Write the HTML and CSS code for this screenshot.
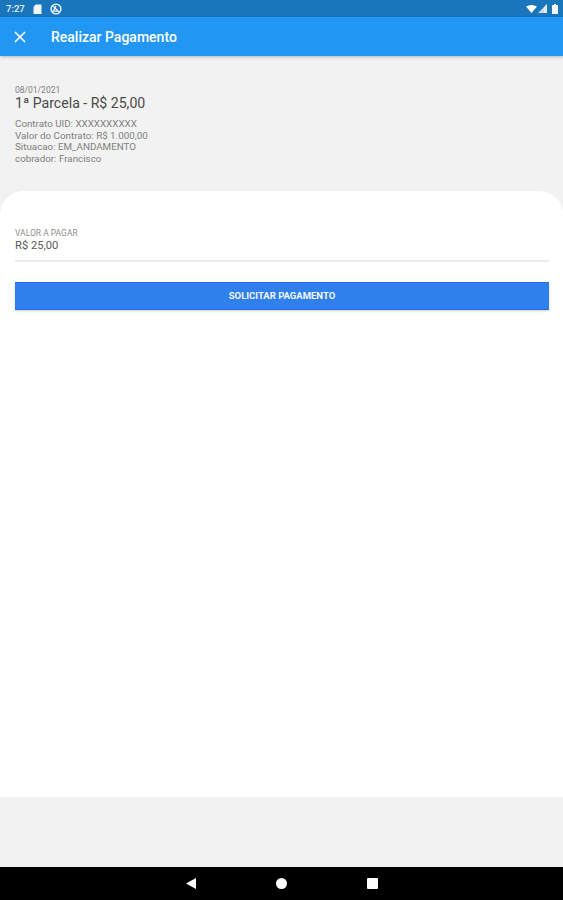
FILE: index.html
```html
<!DOCTYPE html>
<html lang="en">
<head>
    <meta charset="UTF-8">
    <meta name="viewport" content="width=device-width, initial-scale=1.0">
    <title>Realizar Pagamento</title>
    <link rel="stylesheet" href="styles.css">
</head>
<body>
    <div class="screen">
        <div class="status-bar">
            <div class="status-left">
                <span class="status-time">7:27</span>
                <svg width="9" height="10" viewBox="0 0 9 10"><path d="M2.5 0.5H8a.5.5 0 0 1 .5.5v8.5a.5.5 0 0 1-.5.5H1a.5.5 0 0 1-.5-.5V3z" fill="#f2f6fa"/></svg>
                <svg width="12" height="12" viewBox="0 0 11 11"><circle cx="5.5" cy="5.5" r="4.5" fill="none" stroke="#f2f6fa" stroke-width="1.3"/><path d="M3 3l5 5M5.500 2.500L3 7.500h5" fill="none" stroke="#f2f6fa" stroke-width="1.1"/></svg>
            </div>
            <div class="status-right">
                <svg width="11" height="8" viewBox="0 0 11 8"><path d="M0 1.5Q5.5-1.5 11 1.5L5.5 8z" fill="#fff"/></svg>
                <svg width="9" height="9" viewBox="0 0 9 9"><path d="M9 0V9H0z" fill="#c9d9e8"/><path d="M6 9V3.500L9 0V9z" fill="#fff" opacity="0.5"/></svg>
                <svg class="battery" width="6" height="10" viewBox="0 0 6 10"><path d="M2 0h2v1h1.500a.5.5 0 0 1 .5.5V9.500a.5.5 0 0 1-.5.5H.5a.5.5 0 0 1-.5-.5V1.500A.5.5 0 0 1 .5 1H2z" fill="#f2f6fa"/></svg>
            </div>
        </div>

        <header class="app-bar">
            <svg class="close-icon" width="12" height="12" viewBox="0 0 12 12"><path d="M1 1l10 10M11 1L1 11" stroke="#fff" stroke-width="1.7" fill="none"/></svg>
            <h1 class="app-title">Realizar Pagamento</h1>
        </header>

        <main class="content">
            <section class="summary">
                <div class="summary-date">08/01/2021</div>
                <div class="summary-title">1ª Parcela - R$ 25,00</div>
                <div class="summary-details">
                    <div>Contrato UID: XXXXXXXXXX</div>
                    <div>Valor do Contrato: R$ 1.000,00</div>
                    <div>Situacao: EM_ANDAMENTO</div>
                    <div>cobrador: Francisco</div>
                </div>
            </section>

            <section class="payment-card">
                <div class="field">
                    <label class="field-label">VALOR A PAGAR</label>
                    <div class="field-value">R$ 25,00</div>
                </div>
                <button class="pay-button">SOLICITAR PAGAMENTO</button>
            </section>
        </main>

        <nav class="nav-bar">
            <svg width="11" height="12" viewBox="0 0 11 12"><path d="M11 0V12L0 6z" fill="#fff"/></svg>
            <span class="nav-home"></span>
            <span class="nav-recent"></span>
        </nav>
    </div>
</body>
</html>
```

FILE: styles.css
```css
* { box-sizing: border-box; }
body { margin: 0; font-family: Roboto, "Liberation Sans", sans-serif; background-color: #f2f2f2; }
.screen { width: 563px; height: 900px; display: flex; flex-direction: column; overflow: hidden; }

/* Status bar */
.status-bar {
    height: 17px;
    flex: none;
    background-color: #1976bd;
    color: #e8f1f8;
    padding: 0 5px 0 6px;
    display: flex;
    justify-content: space-between;
    align-items: center;
}
.status-left { display: flex; align-items: center; gap: 8px; }
.status-right { display: flex; align-items: center; gap: 1px; }
.status-right .battery { margin-left: 4px; }
.status-time { font-size: 9.500px; font-weight: 500; }

/* App bar */
.app-bar {
    height: 39px;
    flex: none;
    background-color: #2196f3;
    display: flex;
    align-items: center;
    padding-left: 14px;
    box-shadow: 0 1px 3px rgba(0, 0, 0, 0.25);
    position: relative;
}
.close-icon { margin-right: 25px; }
.app-title { margin: 0; font-size: 14px; font-weight: 500; color: #fff; }

/* Main content */
.content { flex: 1; display: flex; flex-direction: column; background-color: #f2f2f2; }
.summary { height: 135px; flex: none; padding: 29px 15px 0; color: #808080; }
.summary-date { font-size: 8.500px; line-height: 10px; }
.summary-title { font-size: 14.100px; line-height: 17px; color: #4a4a4a; margin-bottom: 6px; }
.summary-details { font-size: 9.800px; line-height: 11.500px; }

.payment-card {
    height: 606px;
    flex: none;
    background-color: #fff;
    border-radius: 24px 24px 0 0;
    padding: 37px 14px 0 15px;
}
.field { border-bottom: 2px solid #ececec; height: 34px; margin-bottom: 20px; }
.field-label { display: block; font-size: 8.500px; line-height: 10px; color: #909090; }
.field-value { font-size: 11.200px; line-height: 16px; color: #5a5a5a; }

.pay-button {
    display: block;
    width: 100%;
    height: 28px;
    padding: 0 0 2px;
    background-color: #2f80ed;
    border: none;
    border-top: 1px solid #1f6fdc;
    border-bottom: 1px solid #1f6fdc;
    color: #f4f8fe;
    font-family: inherit;
    font-size: 9.500px;
    font-weight: 700;
    box-shadow: 0 1px 2px rgba(0, 0, 0, 0.2);
}

/* Android nav bar */
.nav-bar {
    height: 33px;
    flex: none;
    background-color: #000;
    display: flex;
    align-items: center;
    justify-content: center;
    gap: 80px;
}
.nav-bar svg { width: 10px; height: 11px; }
.nav-home { width: 11px; height: 11px; border-radius: 50%; background-color: #fff; }
.nav-recent { width: 11px; height: 11px; border-radius: 1px; background-color: #fff; }
```
